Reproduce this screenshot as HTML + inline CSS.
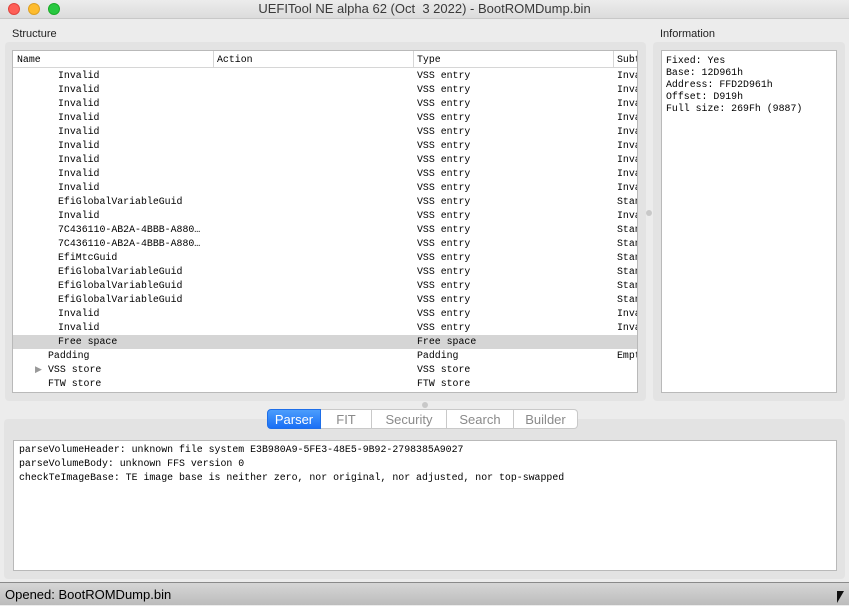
<!DOCTYPE html>
<html><head><style>
*{margin:0;padding:0;box-sizing:border-box}
body{width:849px;height:605px;background:#ececec;position:relative;overflow:hidden;font-family:"Liberation Sans",sans-serif}
.mono{font-family:"Liberation Mono",monospace;font-size:9.9px;color:#000}
.title{position:absolute;left:0;top:0;width:849px;height:19px;background:linear-gradient(#ececec,#dcdcdc);border-bottom:1px solid #c8c8c8;text-align:center;font-size:13px;line-height:18px;color:#3a3a3a}
.dot{position:absolute;top:3px;width:12px;height:12px;border-radius:50%}
.lbl{position:absolute;font-size:11px;color:#222}
.grp{position:absolute;background:#e3e3e3;border-radius:4px}
.box{position:absolute;background:#fff;border:1px solid #b9b9b9}
.row{position:absolute;left:0;height:14px;width:624px;line-height:14px;white-space:nowrap}
.row span{position:absolute}
.tab{position:absolute;top:409px;height:20px;font-size:13px;line-height:19px;text-align:center;color:#8a8a8a;background:#fff;border:1px solid #c9c9c9;border-left:none}
</style></head><body>
<div class="title">UEFITool NE alpha 62 (Oct&nbsp; 3 2022) - BootROMDump.bin</div>
<div class="dot" style="left:8px;background:#fe5f57;border:1px solid #e0443e"></div>
<div class="dot" style="left:28px;background:#febc2e;border:1px solid #dea123"></div>
<div class="dot" style="left:48px;background:#28c840;border:1px solid #1aab29"></div>
<div class="lbl" style="left:12px;top:28px">Structure</div>
<div class="lbl" style="left:660px;top:28px">Information</div>
<div class="grp" style="left:5px;top:42px;width:641px;height:359px"></div>
<div class="grp" style="left:653px;top:42px;width:192px;height:359px"></div>
<div class="box" style="left:12px;top:50px;width:626px;height:343px;overflow:hidden">
<div style="position:absolute;left:0;top:0;width:624px;height:17px;border-bottom:1px solid #d6d6d6" class="mono">
<span style="position:absolute;left:4px;top:3px">Name</span>
<span style="position:absolute;left:200px;top:0;height:16px;border-left:1px solid #d6d6d6"></span>
<span style="position:absolute;left:204px;top:3px">Action</span>
<span style="position:absolute;left:400px;top:0;height:16px;border-left:1px solid #d6d6d6"></span>
<span style="position:absolute;left:404px;top:3px">Type</span>
<span style="position:absolute;left:600px;top:0;height:16px;border-left:1px solid #d6d6d6"></span>
<span style="position:absolute;left:604px;top:3px">Subt</span>
</div>
<div class="mono" id="rows"></div>
</div>
<div style="position:absolute;left:646px;top:210px;width:6px;height:6px;border-radius:50%;background:#c8c8c8"></div>
<div class="box mono" style="left:661px;top:50px;width:176px;height:343px;padding:4px 0 0 4px;line-height:12px">Fixed: Yes<br>Base: 12D961h<br>Address: FFD2D961h<br>Offset: D919h<br>Full size: 269Fh (9887)</div>
<div style="position:absolute;left:422px;top:402px;width:6px;height:6px;border-radius:50%;background:#c8c8c8"></div>
<div class="grp" style="left:4px;top:419px;width:841px;height:160px"></div>
<div class="tab" style="left:267px;width:54px;background:linear-gradient(#4b9dfc,#1a6ff5);color:#fff;border:1px solid #1e6ee8;border-radius:4px 0 0 4px">Parser</div>
<div class="tab" style="left:321px;width:51px">FIT</div>
<div class="tab" style="left:372px;width:75px">Security</div>
<div class="tab" style="left:447px;width:67px">Search</div>
<div class="tab" style="left:514px;width:64px;border-radius:0 4px 4px 0">Builder</div>
<div class="box mono" style="left:13px;top:440px;width:824px;height:131px;padding:2px 0 0 5px;line-height:14px">parseVolumeHeader: unknown file system E3B980A9-5FE3-48E5-9B92-2798385A9027<br>parseVolumeBody: unknown FFS version 0<br>checkTeImageBase: TE image base is neither zero, nor original, nor adjusted, nor top-swapped</div>
<div style="position:absolute;left:0;top:582px;width:849px;height:23px;border-top:1px solid #8a8a8a;background:linear-gradient(#d6d6d6,#bcbcbc);font-size:13px;line-height:23px;padding-left:5px;color:#000">Opened: BootROMDump.bin</div>
<div style="position:absolute;left:837px;top:591px;width:0;height:0;border-left:7px solid #111;border-bottom:12px solid transparent"></div>
<script>
var d=[["Invalid","VSS entry","Inva",45],["Invalid","VSS entry","Inva",45],["Invalid","VSS entry","Inva",45],["Invalid","VSS entry","Inva",45],["Invalid","VSS entry","Inva",45],["Invalid","VSS entry","Inva",45],["Invalid","VSS entry","Inva",45],["Invalid","VSS entry","Inva",45],["Invalid","VSS entry","Inva",45],["EfiGlobalVariableGuid","VSS entry","Stan",45],["Invalid","VSS entry","Inva",45],["7C436110-AB2A-4BBB-A880…","VSS entry","Stan",45],["7C436110-AB2A-4BBB-A880…","VSS entry","Stan",45],["EfiMtcGuid","VSS entry","Stan",45],["EfiGlobalVariableGuid","VSS entry","Stan",45],["EfiGlobalVariableGuid","VSS entry","Stan",45],["EfiGlobalVariableGuid","VSS entry","Stan",45],["Invalid","VSS entry","Inva",45],["Invalid","VSS entry","Inva",45],["Free space","Free space","",45],["Padding","Padding","Empt",35],["VSS store","VSS store","",35],["FTW store","FTW store","",35]];
var h="";d.forEach(function(r,i){var t=18+i*14;h+='<div class="row" style="top:'+t+'px;'+(i==19?'background:#d5d5d5':'')+'">'+(i==21?'<span style="left:22px;color:#999;font-size:9px">▶</span>':'')+'<span style="left:'+r[3]+'px">'+r[0]+'</span><span style="left:404px">'+r[1]+'</span><span style="left:604px">'+r[2]+'</span></div>';});
document.getElementById("rows").innerHTML=h;
</script>
</body></html>
